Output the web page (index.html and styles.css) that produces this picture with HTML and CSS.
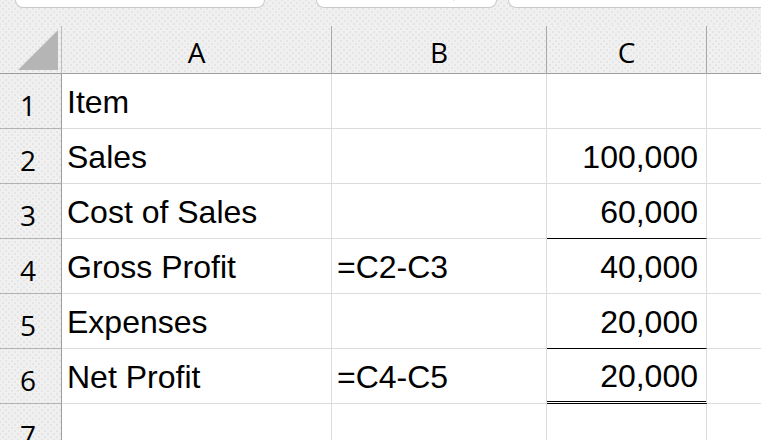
FILE: index.html
```html
<!DOCTYPE html>
<html>
<head>
<meta charset="utf-8">
<link rel="stylesheet" href="styles.css">
</head>
<body>
<div class="app">
  <div class="toolbar">
    <div class="tab tab-name"></div>
    <div class="tab tab-mid">
      <svg class="chev" width="10" height="6" viewBox="0 0 10 6"><path d="M1 -3 L5 1 L9 -3" fill="none" stroke="#333" stroke-width="2"/></svg>
    </div>
    <div class="tab tab-formula"></div>
  </div>
  <div class="sheet">
    <div class="corner"><svg width="40" height="40" viewBox="0 0 40 40"><polygon points="0,40 40,0 40,40" fill="#b5b5b5"/></svg></div>
    <div class="colhead">A</div>
    <div class="colhead">B</div>
    <div class="colhead">C</div>
    <div class="colhead last"></div>

    <div class="rowhead">1</div>
    <div class="cell">Item</div>
    <div class="cell"></div>
    <div class="cell num"></div>
    <div class="cell last"></div>

    <div class="rowhead">2</div>
    <div class="cell">Sales</div>
    <div class="cell"></div>
    <div class="cell num">100,000</div>
    <div class="cell last"></div>

    <div class="rowhead">3</div>
    <div class="cell">Cost of Sales</div>
    <div class="cell"></div>
    <div class="cell num under">60,000</div>
    <div class="cell last"></div>

    <div class="rowhead">4</div>
    <div class="cell">Gross Profit</div>
    <div class="cell">=C2-C3</div>
    <div class="cell num">40,000</div>
    <div class="cell last"></div>

    <div class="rowhead">5</div>
    <div class="cell">Expenses</div>
    <div class="cell"></div>
    <div class="cell num under">20,000</div>
    <div class="cell last"></div>

    <div class="rowhead">6</div>
    <div class="cell">Net Profit</div>
    <div class="cell">=C4-C5</div>
    <div class="cell num double">20,000</div>
    <div class="cell last"></div>

    <div class="rowhead">7</div>
    <div class="cell"></div>
    <div class="cell"></div>
    <div class="cell num"></div>
    <div class="cell last"></div>
  </div>
</div>
</body>
</html>
```
FILE: styles.css
```css
html, body {
  margin: 0;
  padding: 0;
  width: 761px;
  height: 440px;
  overflow: hidden;
  background: #ffffff;
}

.app {
  width: 761px;
  height: 440px;
  overflow: hidden;
}

.toolbar,
.corner,
.colhead,
.rowhead {
  background-color: #f0f0f0;
  background-image:
    radial-gradient(circle, #e4e4e4 0.7px, transparent 1px),
    radial-gradient(circle, #e4e4e4 0.7px, transparent 1px);
  background-size: 6px 6px, 6px 6px;
  background-position: 0 0, 3px 3px;
}

.toolbar {
  height: 26px;
  display: flex;
  align-items: flex-start;
}

.tab {
  height: 8px;
  box-sizing: border-box;
  background: #ffffff;
  border: 1px solid #c9c9c9;
  border-top: none;
  border-radius: 0 0 8px 8px;
  position: relative;
}

.tab-name {
  margin-left: 15px;
  width: 250px;
}

.tab-mid {
  margin-left: 51px;
  width: 181px;
}

.tab-formula {
  margin-left: 11px;
  flex: 1;
  margin-right: -10px;
}

.chev {
  position: absolute;
  left: 132px;
  top: -2px;
}

.sheet {
  display: grid;
  grid-template-columns: 62px 270px 215px 160px 1fr;
  grid-template-rows: 48px repeat(7, 55px);
  font-family: "Liberation Sans", Arial, sans-serif;
  font-size: 32px;
  color: #000000;
}

.corner {
  border-right: 1px solid #bdbdbd;
  border-bottom: 1px solid #9d9d9d;
  box-sizing: border-box;
  display: flex;
  align-items: flex-end;
  justify-content: flex-end;
  padding: 0 3px 3px 0;
}

.corner svg {
  display: block;
}

.colhead {
  border-right: 1px solid #a9a9a9;
  border-bottom: 1px solid #9d9d9d;
  box-sizing: border-box;
  display: flex;
  align-items: center;
  justify-content: center;
  font-family: "Open Sans", "Noto Sans", sans-serif;
  font-size: 28px;
  padding-top: 5px;
  color: #000;
}

.colhead.last {
  border-right: none;
}

.rowhead {
  border-right: 1px solid #9d9d9d;
  border-bottom: 1px solid #b3b3b3;
  box-sizing: border-box;
  display: flex;
  align-items: center;
  justify-content: center;
  font-family: "Open Sans", "Noto Sans", sans-serif;
  font-size: 28px;
  padding: 7px 5px 0 0;
}

.cell {
  border-right: 1px solid #dcdcdc;
  border-bottom: 1px solid #dcdcdc;
  box-sizing: border-box;
  display: flex;
  align-items: center;
  padding: 2px 8px 0 5px;
  white-space: nowrap;
  overflow: hidden;
}

.cell.num {
  justify-content: flex-end;
  padding-right: 8px;
}

.cell.last {
  border-right: none;
}

.cell.under {
  border-bottom: 1px solid #000000;
}

.cell.double {
  border-bottom: 3px double #000000;
}
```
